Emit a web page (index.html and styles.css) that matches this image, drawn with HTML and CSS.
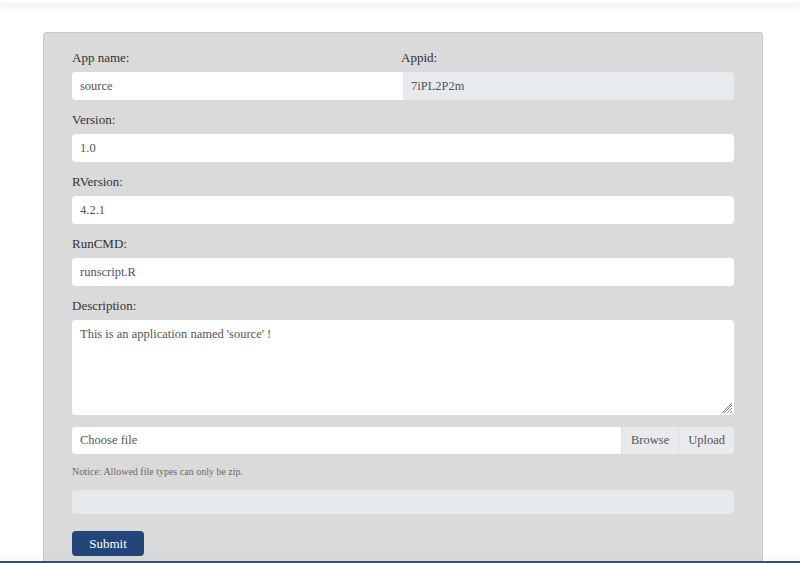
FILE: index.html
```html
<!DOCTYPE html>
<html>
<head>
<meta charset="utf-8">
<link rel="stylesheet" href="styles.css">
</head>
<body>
<div class="topbar"></div>
<main class="page">
  <form class="card">
    <div class="row">
      <div class="col">
        <label class="lbl">App name:</label>
        <div class="field">source</div>
      </div>
      <div class="col">
        <label class="lbl">Appid:</label>
        <div class="field readonly">7iPL2P2m</div>
      </div>
    </div>
    <label class="lbl">Version:</label>
    <div class="field">1.0</div>
    <label class="lbl">RVersion:</label>
    <div class="field">4.2.1</div>
    <label class="lbl">RunCMD:</label>
    <div class="field">runscript.R</div>
    <label class="lbl">Description:</label>
    <div class="field area">This is an application named 'source' !
      <svg class="grip" width="12" height="12" viewBox="0 0 12 12"><path d="M11 3L3 11M11 6L6 11M11 9L9 11M11 1L1 11" stroke="#888" stroke-width="1" fill="none"/></svg>
    </div>
    <div class="file">
      <span class="file-name">Choose file</span>
      <span class="file-btn">Browse</span>
      <span class="file-btn">Upload</span>
    </div>
    <p class="notice">Notice: Allowed file types can only be zip.</p>
    <div class="progress"></div>
    <button type="button" class="submit">Submit</button>
  </form>
</main>
<div class="bottombar"></div>
</body>
</html>
```
FILE: styles.css
```css
html, body {
  margin: 0;
  padding: 0;
  background: #fff;
  font-family: "Liberation Serif", "DejaVu Serif", serif;
  color: #333;
  overflow: hidden;
  height: 563px;
}
.topbar {
  height: 3px;
  background: #fff;
  box-shadow: 0 2px 7px rgba(0,0,0,0.13);
  position: relative;
  z-index: 2;
}
.page {
  padding: 29px 37px 0 43px;
}
.card {
  display: block;
  background: #dadada;
  border: 1px solid #c9c9c9;
  border-radius: 3px;
  padding: 15px 28px 40px 28px;
}
.row {
  display: flex;
}
.col {
  flex: 1;
  display: flex;
  flex-direction: column;
}
.col + .col .lbl {
  margin-left: -2px;
}
.lbl {
  display: block;
  font-size: 13px;
  line-height: 20px;
  height: 20px;
  margin: 0 0 4px 0;
  color: #333;
}
.field {
  height: 28px;
  line-height: 28px;
  padding: 0 8px;
  background: #fff;
  border-radius: 4px;
  font-size: 12.5px;
  color: #555;
  margin-bottom: 10px;
}
.col:first-child .field {
  border-top-right-radius: 0;
  border-bottom-right-radius: 0;
}
.col:last-child .field {
  border-top-left-radius: 0;
  border-bottom-left-radius: 0;
}
.field.readonly {
  background: #e7eaee;
}
.area {
  height: 95px;
  line-height: 18px;
  padding-top: 5px;
  box-sizing: border-box;
  position: relative;
  margin-bottom: 12px;
}
.grip {
  position: absolute;
  right: 1px;
  bottom: 1px;
}
.file {
  display: flex;
  height: 27px;
  line-height: 27px;
  background: #fff;
  border-radius: 4px;
  font-size: 12.5px;
  color: #555;
  overflow: hidden;
}
.file-name {
  flex: 1;
  padding: 0 8px;
}
.file-btn {
  background: #e8eaed;
  padding: 0 9px;
  border-left: 1px solid #dcdfe3;
  color: #555;
  font-size: 12.5px;
}
.notice {
  font-size: 10px;
  color: #6a6a6a;
  margin: 8px 0 0 0;
  line-height: 20px;
}
.progress {
  height: 24px;
  background: #e6e9ec;
  border-radius: 4px;
  margin-top: 8px;
}
.submit {
  display: block;
  margin-top: 17px;
  width: 72px;
  height: 25px;
  background: #23467a;
  color: #fff;
  border: 0;
  border-radius: 4px;
  font-family: "Liberation Serif", "DejaVu Serif", serif;
  font-size: 13px;
  padding: 0;
}
.bottombar {
  position: fixed;
  left: 0;
  right: 0;
  bottom: 0;
  height: 2px;
  background: #3b4f6e;
  box-shadow: 0 -3px 6px rgba(120,150,200,0.18);
}
```
